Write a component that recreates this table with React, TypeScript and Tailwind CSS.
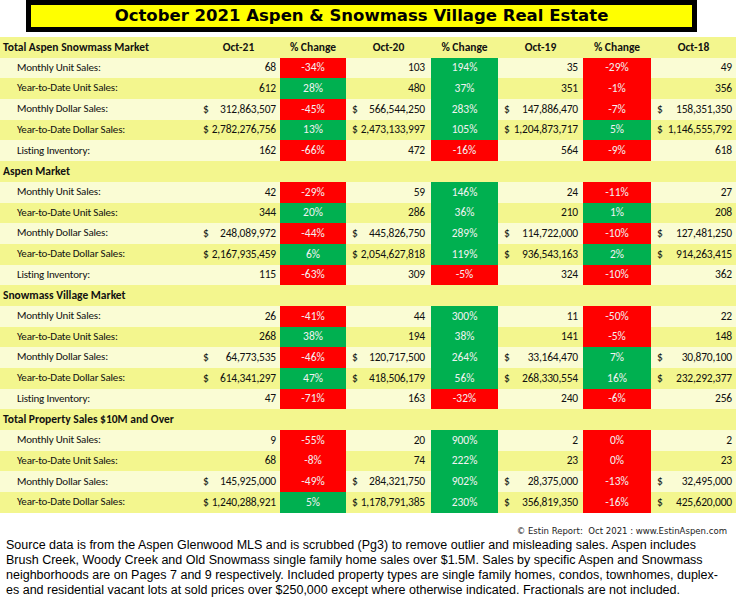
import React from "react";

type Row = { label: string; section?: boolean; v?: string[]; c?: ("r" | "g")[]; dollar?: boolean };

const data: Row[] = [
  { label: "Monthly Unit Sales:", v: ["68", "-34%", "103", "194%", "35", "-29%", "49"], c: ["r", "g", "r"] },
  { label: "Year-to-Date Unit Sales:", v: ["612", "28%", "480", "37%", "351", "-1%", "356"], c: ["g", "g", "r"] },
  { label: "Monthly Dollar Sales:", dollar: true, v: ["312,863,507", "-45%", "566,544,250", "283%", "147,886,470", "-7%", "158,351,350"], c: ["r", "g", "r"] },
  { label: "Year-to-Date Dollar Sales:", dollar: true, v: ["2,782,276,756", "13%", "2,473,133,997", "105%", "1,204,873,717", "5%", "1,146,555,792"], c: ["g", "g", "g"] },
  { label: "Listing Inventory:", v: ["162", "-66%", "472", "-16%", "564", "-9%", "618"], c: ["r", "r", "r"] },
  { label: "Aspen Market", section: true },
  { label: "Monthly Unit Sales:", v: ["42", "-29%", "59", "146%", "24", "-11%", "27"], c: ["r", "g", "r"] },
  { label: "Year-to-Date Unit Sales:", v: ["344", "20%", "286", "36%", "210", "1%", "208"], c: ["g", "g", "g"] },
  { label: "Monthly Dollar Sales:", dollar: true, v: ["248,089,972", "-44%", "445,826,750", "289%", "114,722,000", "-10%", "127,481,250"], c: ["r", "g", "r"] },
  { label: "Year-to-Date Dollar Sales:", dollar: true, v: ["2,167,935,459", "6%", "2,054,627,818", "119%", "936,543,163", "2%", "914,263,415"], c: ["g", "g", "g"] },
  { label: "Listing Inventory:", v: ["115", "-63%", "309", "-5%", "324", "-10%", "362"], c: ["r", "r", "r"] },
  { label: "Snowmass Village Market", section: true },
  { label: "Monthly Unit Sales:", v: ["26", "-41%", "44", "300%", "11", "-50%", "22"], c: ["r", "g", "r"] },
  { label: "Year-to-Date Unit Sales:", v: ["268", "38%", "194", "38%", "141", "-5%", "148"], c: ["g", "g", "r"] },
  { label: "Monthly Dollar Sales:", dollar: true, v: ["64,773,535", "-46%", "120,717,500", "264%", "33,164,470", "7%", "30,870,100"], c: ["r", "g", "g"] },
  { label: "Year-to-Date Dollar Sales:", dollar: true, v: ["614,341,297", "47%", "418,506,179", "56%", "268,330,554", "16%", "232,292,377"], c: ["g", "g", "g"] },
  { label: "Listing Inventory:", v: ["47", "-71%", "163", "-32%", "240", "-6%", "256"], c: ["r", "r", "r"] },
  { label: "Total Property Sales $10M and Over", section: true },
  { label: "Monthly Unit Sales:", v: ["9", "-55%", "20", "900%", "2", "0%", "2"], c: ["r", "g", "r"] },
  { label: "Year-to-Date Unit Sales:", v: ["68", "-8%", "74", "222%", "23", "0%", "23"], c: ["r", "g", "r"] },
  { label: "Monthly Dollar Sales:", dollar: true, v: ["145,925,000", "-49%", "284,321,750", "902%", "28,375,000", "-13%", "32,495,000"], c: ["r", "g", "r"] },
  { label: "Year-to-Date Dollar Sales:", dollar: true, v: ["1,240,288,921", "5%", "1,178,791,385", "230%", "356,819,350", "-16%", "425,620,000"], c: ["g", "g", "r"] },
];

const grid = "grid grid-cols-[197px_83px_66px_85px_67px_85px_68px_85px] h-[20.7px] items-stretch";

function NumCell({ val, dollar, pad }: { val: string; dollar?: boolean; pad: string }) {
  return (
    <div className={`flex items-center ${dollar ? "justify-between" : "justify-end"} pl-[6px] ${pad} tracking-[-0.2px]`}>
      {dollar && <span>$</span>}
      <span>{val}</span>
    </div>
  );
}

function Pct({ val, c }: { val: string; c: "r" | "g" }) {
  return (
    <div className={`flex items-center justify-center text-[#f2f2f2] ${c === "r" ? "bg-[#ff0000]" : "bg-[#00b050]"}`}>
      {val}
    </div>
  );
}

export default function App() {
  return (
    <div
      className="w-[741px] h-[605px] bg-white overflow-hidden text-black"
      style={{ fontFamily: "Carlito, Calibri, Roboto, sans-serif" }}
    >
      <div className="ml-[26px] w-[671px] h-[32px] border-[5px] border-black bg-[#ffff00] flex items-center justify-center">
        <span
          className="font-bold text-[16.5px] leading-none"
          style={{ fontFamily: "Verdana, 'DejaVu Sans', sans-serif" }}
        >
          October 2021 Aspen &amp; Snowmass Village Real Estate
        </span>
      </div>
      <div className="mt-[5px] w-[736px] text-[11.5px] text-[#111]">
        <div className={`${grid} bg-[#f3f68e] font-bold`}>
          <div className="flex items-center pl-[3px]">Total Aspen Snowmass Market</div>
          <div className="flex items-center justify-center">Oct-21</div>
          <div className="flex items-center justify-center">% Change</div>
          <div className="flex items-center justify-center">Oct-20</div>
          <div className="flex items-center justify-center">% Change</div>
          <div className="flex items-center justify-center">Oct-19</div>
          <div className="flex items-center justify-center">% Change</div>
          <div className="flex items-center justify-center">Oct-18</div>
        </div>
        {data.map((r, i) => {
          const bg = i % 2 === 0 ? "bg-[#fafcd4]" : "bg-[#f3f68e]";
          if (r.section) {
            return (
              <div key={i} className={`${grid} ${bg} font-bold`}>
                <div className="flex items-center pl-[3px] col-span-8">{r.label}</div>
              </div>
            );
          }
          const v = r.v!;
          const c = r.c!;
          return (
            <div key={i} className={`${grid} ${bg}`}>
              <div className="flex items-center pl-[17px] text-[11px] tracking-[-0.2px]">{r.label}</div>
              <NumCell val={v[0]} dollar={r.dollar} pad="pr-[4px]" />
              <Pct val={v[1]} c={c[0]} />
              <NumCell val={v[2]} dollar={r.dollar} pad="pr-[6px]" />
              <Pct val={v[3]} c={c[1]} />
              <NumCell val={v[4]} dollar={r.dollar} pad="pr-[5px]" />
              <Pct val={v[5]} c={c[2]} />
              <NumCell val={v[6]} dollar={r.dollar} pad="pr-[4px]" />
            </div>
          );
        })}
      </div>
      <div
        className="mt-[13px] pr-[14px] text-right text-[9.5px] leading-none text-[#222]"
        style={{ fontFamily: "Tahoma, 'DejaVu Sans Condensed', 'Liberation Sans', sans-serif" }}
      >
        © Estin Report:&nbsp; Oct 2021 : www.EstinAspen.com
      </div>
      <div
        className="mt-[3px] pl-[6px] text-[12.5px] leading-[14.8px] whitespace-nowrap"
        style={{ fontFamily: "Tahoma, 'Liberation Sans', sans-serif" }}
      >
        <div>Source data is from the Aspen Glenwood MLS and is scrubbed (Pg3) to remove outlier and misleading sales. Aspen includes</div>
        <div>Brush Creek, Woody Creek and Old Snowmass single family home sales over $1.5M. Sales by specific Aspen and Snowmass</div>
        <div>neighborhoods are on Pages 7 and 9 respectively. Included property types are single family homes, condos, townhomes, duplex-</div>
        <div>es and residential vacant lots at sold prices over $250,000 except where otherwise indicated. Fractionals are not included.</div>
      </div>
    </div>
  );
}
